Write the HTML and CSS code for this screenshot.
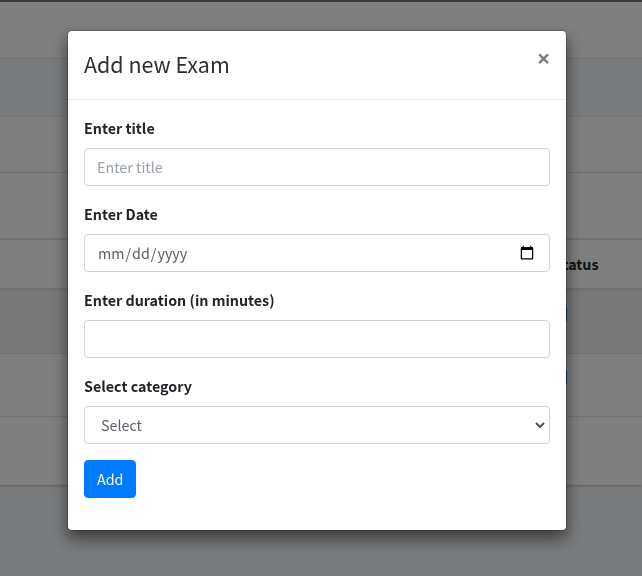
FILE: index.html
```html
<!DOCTYPE html>
<html lang="en">
<head>
<meta charset="utf-8">
<title>Exams</title>
<link rel="stylesheet" href="styles.css">
</head>
<body>
<main class="page">
  <div class="topbar"></div>
  <div class="navbar"></div>
  <div class="content-header"></div>
  <section class="card">
    <div class="card-header"></div>
    <div class="card-tools"></div>
    <div class="row row-head"><b>Status</b></div>
    <div class="row row-striped"><span class="check"></span></div>
    <div class="row"><span class="check"></span></div>
    <div class="row-last"></div>
  </section>
</main>
<div class="backdrop">
  <div class="modal">
    <header class="modal-header">
      <h4>Add new Exam</h4>
      <button class="close" type="button" aria-label="Close">×</button>
    </header>
    <form class="modal-body">
      <div class="group">
        <label for="title">Enter title</label>
        <input class="control" id="title" type="text" placeholder="Enter title">
      </div>
      <div class="group">
        <label for="date">Enter Date</label>
        <input class="control date" id="date" type="date">
      </div>
      <div class="group">
        <label for="duration">Enter duration (in minutes)</label>
        <input class="control" id="duration" type="text">
      </div>
      <div class="group select-group">
        <label for="category">Select category</label>
        <select class="control" id="category"><option>Select</option></select>
        <svg class="chevron" viewBox="0 0 10 7" aria-hidden="true"><path d="M1 1l4 4 4-4"/></svg>
      </div>
      <div class="group"><button class="btn" type="button">Add</button></div>
    </form>
  </div>
</div>
</body>
</html>
```
FILE: styles.css
```css
* { box-sizing: border-box; }
body {
  margin: 0;
  height: 576px;
  overflow: hidden;
  color: #212529;
  background: #f4f6f9;
  font: 14.3px/24px "Noto Sans CJK JP", sans-serif;
}
.topbar { height: 2px; background: #777; }
.navbar { height: 57px; background: #fff; border-bottom: 1px solid #dee2e6; }
.content-header { height: 58px; }
.card { background: #fff; box-shadow: 0 0 1px rgba(0,0,0,.13), 0 1px 3px rgba(0,0,0,.2); }
.card-header { height: 56px; border-bottom: 1px solid #dfdfdf; }
.card-tools { height: 65px; }
.row {
  display: flex;
  height: 63px;
  padding: 12px 0 0 554px;
  border-top: 1px solid #dee2e6;
}
.row-head { height: 52px; border-top: 2px solid #dee2e6; border-bottom: 2px solid #dee2e6; }
.row-striped { border-top-color: #e8e8e8; background: #f2f2f2; }
.check { width: 13px; height: 13px; margin-top: 5px; background: #007bff; }
.row-last { height: 69px; border-top: 1px solid #dee2e6; }
.backdrop {
  position: fixed;
  inset: 0;
  display: flex;
  align-items: flex-start;
  padding: 30px 0 0 67px;
  background: rgba(0,0,0,.5);
}
.modal {
  width: 500px;
  background: #fff;
  background-clip: padding-box;
  border: 1px solid rgba(0,0,0,.2);
  border-radius: 4.8px;
  box-shadow: 0 8px 16px rgba(0,0,0,.5);
}
.modal-header {
  display: flex;
  justify-content: space-between;
  height: 69px;
  padding: 16px;
  border-bottom: 1px solid #e9ecef;
}
h4 { margin: 0; color: #2d3135; font-size: 21.45px; font-weight: 400; line-height: 34px; }
.close {
  height: 54px;
  margin: -16px;
  padding: 0 15.5px 0 16px;
  border: 0;
  background: none;
  color: #000;
  opacity: .5;
  font: 700 24px/24px "Open Sans", sans-serif;
}
.modal-body { padding: 16px; }
.group { margin-bottom: 16px; }
label { display: block; margin-bottom: 8px; font-weight: 700; }
.control {
  display: block;
  width: 100%;
  height: 38px;
  padding: 5px 12px 7px;
  border: 1px solid #ced4da;
  border-radius: 4px;
  background: #fff;
  color: #596067;
  font: inherit;
}
.date { padding: 6px 12px; }
.date::-webkit-calendar-picker-indicator { width: 16px; height: 16px; }
.control::placeholder { color: #9aa1a8; opacity: 1; }
.select-group { position: relative; }
select.control { appearance: none; padding: 6px 12px 6px 16px; }
.chevron {
  position: absolute;
  right: 5px;
  bottom: 15px;
  width: 10px;
  height: 7px;
  fill: none;
  stroke: #495057;
  stroke-width: 2;
}
.btn {
  display: block;
  height: 38px;
  padding: 6px 12px;
  border: 1px solid #007bff;
  border-radius: 4px;
  background: #007bff;
  color: #fff;
  font: inherit;
}
```
